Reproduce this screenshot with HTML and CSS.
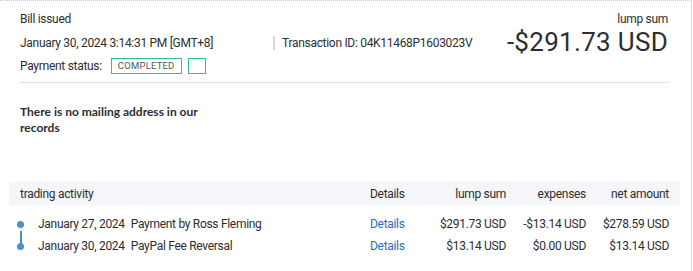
FILE: index.html
```html
<!DOCTYPE html>
<html>
<head>
  <meta charset="utf-8">
  <meta name="viewport" content="width=device-width, initial-scale=1.0">
  <title>Transaction details</title>
  <link rel="stylesheet" href="styles.css">
</head>
<body>
<div class="card">
  <section class="summary">
    <div class="summary-info">
      <div class="label">Bill issued</div>
      <div class="meta">
        <span class="date">January 30, 2024 3:14:31 PM [GMT+8]</span>
        <span class="txn">Transaction ID: 04K11468P1603023V</span>
      </div>
      <div class="status">
        <span>Payment status:</span>
        <span class="badge">COMPLETED</span>
        <span class="badge badge-empty"></span>
      </div>
    </div>
    <div class="summary-amount">
      <div class="label">lump sum</div>
      <div class="total">-$291.73 USD</div>
    </div>
  </section>

  <section class="address">
    <p>There is no mailing address in our records</p>
  </section>

  <section class="activity">
    <div class="row head">
      <div class="c-name">trading activity</div>
      <div class="c-details">Details</div>
      <div class="num">lump sum</div>
      <div class="num">expenses</div>
      <div class="num">net amount</div>
    </div>
    <div class="row item first">
      <div class="c-name"><span class="dot"></span><span class="day">January 27, 2024</span>Payment by Ross Fleming</div>
      <div class="c-details"><a href="#">Details</a></div>
      <div class="num">$291.73 USD</div>
      <div class="num">-$13.14 USD</div>
      <div class="num">$278.59 USD</div>
    </div>
    <div class="row item">
      <div class="c-name"><span class="dot"></span><span class="day">January 30, 2024</span>PayPal Fee Reversal</div>
      <div class="c-details"><a href="#">Details</a></div>
      <div class="num">$13.14 USD</div>
      <div class="num">$0.00 USD</div>
      <div class="num">$13.14 USD</div>
    </div>
  </section>
</div>
</body>
</html>
```

FILE: styles.css
```css
body { margin: 0; background: #fff; color: #2c2e2f; font-family: Roboto, "Liberation Sans", sans-serif; font-size: 12px; letter-spacing: -0.3px; }
.card { width: 692px; height: 271px; border-top: 1px dotted #c9c9c9; border-right: 1px solid #dcdcdc; box-sizing: border-box; }

.summary { display: flex; justify-content: space-between; margin: 0 23px 0 20px; padding: 11px 0 8px; border-bottom: 1px dotted #c9c9c9; }
.label { line-height: 14px; }
.meta { display: flex; margin-top: 10px; line-height: 14px; }
.date { width: 253px; }
.txn { border-left: 2px solid #d6d6d6; padding-left: 7px; }
.status { display: flex; align-items: center; margin-top: 8px; line-height: 14px; }
.badge { margin-left: 9px; height: 16px; padding: 0 6px; border: 1px solid #2dbf8f; font-size: 9.5px; color: #4d5a55; letter-spacing: 0.2px; display: inline-flex; align-items: center; box-sizing: border-box; }
.badge-empty { margin-left: 6px; width: 18px; padding: 0; }
.summary-amount { text-align: right; }
.total { font-size: 26px; line-height: 28px; margin-top: 2px; letter-spacing: 0.3px; }

.address { height: 98px; padding: 21px 20px 0; box-sizing: border-box; }
.address p { margin: 0; width: 200px; font-family: Lato, sans-serif; font-weight: bold; font-size: 12px; line-height: 16px; letter-spacing: 0; }

.activity { margin-left: 9px; width: 671px; }
.row { display: grid; grid-template-columns: 361px 59px 77px 80px 83px; align-items: center; }
.head { height: 23px; margin-top: 1px; background: #f5f6fa; }
.head .c-name { padding-left: 11px; }
.item { height: 22px; }
.item.first { margin-top: 8px; }
.num { text-align: right; }
.c-name { display: flex; align-items: center; position: relative; }
.dot { width: 7px; height: 7px; border-radius: 50%; background: #4a90c9; margin: 0 14px 0 8px; }
.first .dot::after { content: ""; position: absolute; left: 11px; top: 14px; width: 2px; height: 17px; background: #4a90c9; }
.day { margin-right: 6px; }
.c-details a { color: #2f6cb4; text-decoration: none; }
```
